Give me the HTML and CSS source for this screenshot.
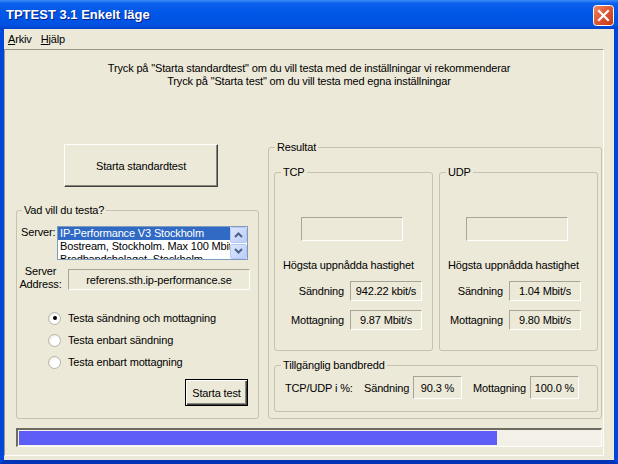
FILE: index.html
```html
<!DOCTYPE html>
<html>
<head>
<meta charset="utf-8">
<title>TPTEST 3.1 Enkelt läge</title>
<link rel="stylesheet" href="styles.css">
</head>
<body>
<div class="window">
  <div class="titlebar">
    <span class="title">TPTEST 3.1 Enkelt läge</span>
    <span class="close">
      <svg width="21" height="21" viewBox="0 0 21 21">
        <defs>
          <linearGradient id="red" x1="0" y1="0" x2="1" y2="1">
            <stop offset="0" stop-color="#F08B69"/>
            <stop offset="0.45" stop-color="#E25A35"/>
            <stop offset="1" stop-color="#C23A14"/>
          </linearGradient>
        </defs>
        <rect x="0.5" y="0.5" width="20" height="20" rx="3" fill="url(#red)" stroke="#fff"/>
        <path d="M6 6 L15 15 M15 6 L6 15" stroke="#fff" stroke-width="2.2" stroke-linecap="square"/>
      </svg>
    </span>
  </div>
  <div class="frame">
    <div class="menubar">
      <span class="menu"><u>A</u>rkiv</span>
      <span class="menu"><u>H</u>jälp</span>
    </div>
    <div class="client">
      <div class="intro">
        <p>Tryck på "Starta standardtest" om du vill testa med de inställningar vi rekommenderar</p>
        <p>Tryck på "Starta test" om du vill testa med egna inställningar</p>
      </div>

      <div class="panes">
        <div class="left">
          <div class="btn std">Starta standardtest</div>

          <fieldset class="group what">
            <legend>Vad vill du testa?</legend>
            <div class="server-row">
              <span class="lbl">Server:</span>
              <div class="listbox">
                <div class="items">
                  <div class="item sel">IP-Performance V3 Stockholm</div>
                  <div class="item">Bostream, Stockholm. Max 100 Mbit</div>
                  <div class="item">Bredbandsbolaget, Stockholm</div>
                </div>
                <div class="scroll">
                  <span class="sbtn">
                    <svg width="9" height="6" viewBox="0 0 9 6"><path d="M1 5 L4.5 1.5 L8 5" fill="none" stroke="#4D6185" stroke-width="2"/></svg>
                  </span>
                  <span class="sbtn">
                    <svg width="9" height="6" viewBox="0 0 9 6"><path d="M1 1 L4.5 4.5 L8 1" fill="none" stroke="#4D6185" stroke-width="2"/></svg>
                  </span>
                </div>
              </div>
            </div>

            <div class="addr-row">
              <span class="addr-lbl">Server<br>Address:</span>
              <span class="field addr">referens.sth.ip-performance.se</span>
            </div>

            <div class="radios">
              <div class="radio-row"><span class="radio on"></span>Testa sändning och mottagning</div>
              <div class="radio-row"><span class="radio"></span>Testa enbart sändning</div>
              <div class="radio-row"><span class="radio"></span>Testa enbart mottagning</div>
            </div>

            <div class="run-row">
              <div class="btn run">Starta test</div>
            </div>
          </fieldset>
        </div>

        <fieldset class="group result">
          <legend>Resultat</legend>
          <div class="proto-row">
            <fieldset class="group proto tcp">
              <legend>TCP</legend>
              <div class="field gauge"></div>
              <div class="max">Högsta uppnådda hastighet</div>
              <div class="val-row"><span class="val-lbl">Sändning</span><span class="field val">942.22 kbit/s</span></div>
              <div class="val-row"><span class="val-lbl">Mottagning</span><span class="field val">9.87 Mbit/s</span></div>
            </fieldset>
            <fieldset class="group proto udp">
              <legend>UDP</legend>
              <div class="field gauge"></div>
              <div class="max">Högsta uppnådda hastighet</div>
              <div class="val-row"><span class="val-lbl">Sändning</span><span class="field val">1.04 Mbit/s</span></div>
              <div class="val-row"><span class="val-lbl">Mottagning</span><span class="field val">9.80 Mbit/s</span></div>
            </fieldset>
          </div>
          <fieldset class="group bandwidth">
            <legend>Tillgänglig bandbredd</legend>
            <div class="bw-row">
              <span class="bw-title">TCP/UDP i %:</span>
              <span class="bw-send">Sändning</span>
              <span class="field bw-val">90.3 %</span>
              <span class="bw-recv">Mottagning</span>
              <span class="field bw-val">100.0 %</span>
            </div>
          </fieldset>
        </fieldset>
      </div>

      <div class="progress"><div class="fill" style="width: 82%"></div></div>
    </div>
  </div>
</div>
</body>
</html>
```

FILE: styles.css
```css
body {
  margin: 0;
  font-family: "Liberation Sans", Arial, sans-serif;
  font-size: 11px;
  letter-spacing: -0.15px;
  color: #000;
}

.window {
  width: 618px;
  height: 464px;
  display: flex;
  flex-direction: column;
  background: #ECE9D8;
  overflow: hidden;
}

/* title bar */

.titlebar {
  height: 29px;
  flex: none;
  display: flex;
  align-items: flex-start;
  background: linear-gradient(#3C8CF8 0%, #0A5FEB 12%, #0056E6 50%, #0053E2 85%, #0041C8 100%);
}

.title {
  flex: 1;
  padding: 8px 0 0 6px;
  color: #fff;
  font-weight: bold;
  font-size: 13px;
  line-height: 14px;
  letter-spacing: 0;
  text-shadow: 1px 1px #0A1E8A;
}

.close {
  margin: 5px 4px 0 0;
  width: 21px;
  height: 21px;
}

.close svg {
  display: block;
}

/* frame and menu */

.frame {
  flex: 1;
  display: flex;
  flex-direction: column;
  border: 4px solid #0050DE;
  border-top: 0;
  border-left-color: #0046D8;
  border-right-color: #0046D8;
  border-bottom-color: #0033B8;
}

.menubar {
  height: 20px;
  flex: none;
  display: flex;
  align-items: center;
  line-height: 13px;
}

.menu {
  padding: 0 4px;
  margin-right: 1px;
}

.client {
  width: 598px;
  height: 405px;
  border: 1px solid;
  border-color: #9A988A #fff #fff #9A988A;
}

.intro {
  height: 79px;
  padding: 12px 0 0 10px;
  text-align: center;
  line-height: 13px;
}

.intro p {
  margin: 0;
}

/* panes */

.panes {
  display: flex;
  padding-left: 11px;
  height: 278px;
}

.left {
  width: 243px;
  display: flex;
  flex-direction: column;
}

.btn {
  display: flex;
  align-items: center;
  justify-content: center;
  box-sizing: border-box;
}

.btn.std {
  margin: 3px 0 0 48px;
  width: 154px;
  height: 43px;
  border: 1px solid;
  border-color: #fff #404040 #404040 #fff;
  box-shadow: inset -1px -1px #8A887C;
}

.btn.run {
  width: 63px;
  height: 27px;
  border: 1px solid #000;
  box-shadow: inset 1px 1px #fff, inset -1px -1px #404040, inset -2px -2px #8A887C;
}

/* group boxes */

.group {
  margin: 0;
  border: 1px solid #C5C2AF;
  border-radius: 3px;
  box-sizing: border-box;
  min-width: 0;
}

.group legend {
  padding: 0 2px;
  margin-left: 1px;
  line-height: 13px;
}

.what {
  margin-top: 17px;
  height: 215px;
  padding: 9px 0 0 4px;
}

.server-row {
  display: flex;
  align-items: flex-start;
  line-height: 13px;
}

.lbl {
  width: 36px;
}

.listbox {
  width: 191px;
  height: 34px;
  box-sizing: border-box;
  border: 1px solid #7F9DB9;
  background: #fff;
  display: flex;
  overflow: hidden;
}

.items {
  flex: 1;
  overflow: hidden;
  white-space: nowrap;
}

.item {
  height: 13px;
  line-height: 13px;
  padding-left: 2px;
}

.item.sel {
  background: #316AC5;
  color: #fff;
}

.scroll {
  width: 17px;
  display: flex;
  flex-direction: column;
  gap: 1px;
}

.sbtn {
  height: 15px;
  display: flex;
  align-items: center;
  justify-content: center;
  border: 1px solid #B4C8F6;
  border-radius: 2px;
  background: linear-gradient(135deg, #DCE6FD, #BCCEF9);
}

.addr-row {
  display: flex;
  align-items: flex-start;
  margin-top: 5px;
}

.addr-lbl {
  width: 47px;
  text-align: center;
  line-height: 13px;
  margin-left: -4px;
  margin-right: 4px;
}

.field {
  display: flex;
  align-items: center;
  justify-content: center;
  box-sizing: border-box;
  border: 1px solid;
  border-color: #A7A597 #fff #fff #A7A597;
}

.addr {
  margin-top: 4px;
  width: 182px;
  height: 21px;
}

.radios {
  margin-top: 16px;
  padding-left: 27px;
}

.radio-row {
  height: 22px;
  display: flex;
  align-items: center;
}

.radio {
  width: 11px;
  height: 11px;
  margin-right: 7px;
  border: 1px solid #B8B6A8;
  border-radius: 50%;
  background: radial-gradient(circle at 60% 60%, #fff 40%, #E2E0D4 100%);
  display: flex;
  align-items: center;
  justify-content: center;
}

.radio.on::after {
  content: "";
  width: 4px;
  height: 4px;
  border-radius: 50%;
  background: #000;
}

.run-row {
  display: flex;
  justify-content: flex-end;
  margin-top: 6px;
  padding-right: 10px;
}

/* results */

.result {
  margin-left: 9px;
  width: 334px;
  height: 278px;
  padding: 12px 0 0 5px;
}

.proto-row {
  display: flex;
  gap: 6px;
}

.proto {
  width: 159px;
  height: 185px;
  padding: 38px 0 0 5px;
}

.gauge {
  width: 102px;
  height: 24px;
  margin-left: 21px;
}

.max {
  margin: 18px 0 0 3px;
  line-height: 13px;
}

.val-row {
  display: flex;
  align-items: center;
  margin-top: 9px;
}

.val-row:first-of-type {
  margin-top: 18px;
}

.val-lbl {
  width: 64px;
  text-align: right;
  margin-right: 6px;
}

.udp .val-lbl {
  width: 58px;
}

.val {
  width: 72px;
  height: 20px;
}

.bandwidth {
  margin-top: 8px;
  width: 324px;
  height: 53px;
  padding: 4px 0 0 5px;
}

.bw-row {
  display: flex;
  align-items: center;
}

.bw-title {
  width: 84px;
  padding-left: 5px;
  box-sizing: border-box;
}

.bw-send {
  width: 49px;
}

.bw-recv {
  width: 57px;
  margin-left: 11px;
}

.bw-val {
  width: 49px;
  height: 23px;
}

/* progress */

.progress {
  margin: 9px 0 0 11px;
  width: 586px;
  height: 19px;
  box-sizing: border-box;
  border-style: solid;
  border-width: 2px 1px 1px 2px;
  border-color: #6E6C60 #fff #fff #6E6C60;
  background: #F3F1E7;
}

.fill {
  height: 14px;
  margin: 1px 0 0 1px;
  background: #5E5EF6;
}
```
